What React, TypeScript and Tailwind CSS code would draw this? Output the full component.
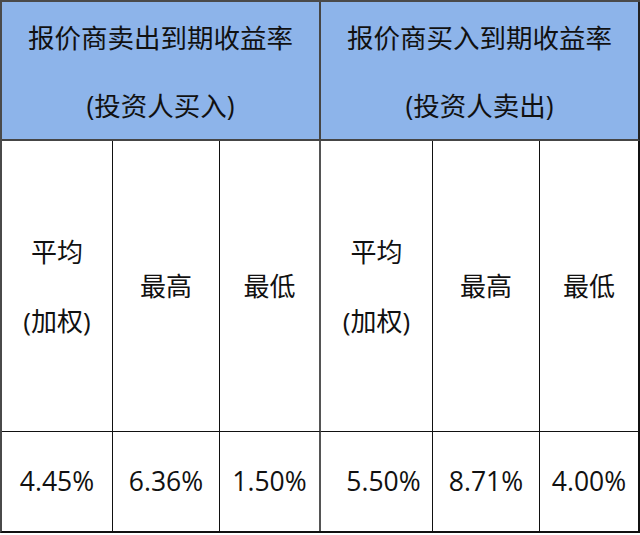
import React from 'react';

const font = { fontFamily: '"Open Sans", "Noto Sans CJK SC", sans-serif' };

const groups = [
  { title: '报价商卖出到期收益率', sub: '(投资人买入)', values: ['4.45%', '6.36%', '1.50%'] },
  { title: '报价商买入到期收益率', sub: '(投资人卖出)', values: ['5.50%', '8.71%', '4.00%'] },
];

export default function App() {
  return (
    <div className="w-[640px] h-[535px] bg-white text-[#111]" style={font}>
      <div className="grid grid-cols-[111px_107px_101px_112px_107px_100px] grid-rows-[139px_290px_100px] w-[640px] border-l-2 border-t-2 border-l-[#4a4a4a] border-t-[#4a4a4a] border-b-2 border-b-[#111]">
        {/* 表头 */}
        {groups.map((g, i) => (
          <div
            key={g.title}
            className={
              'col-span-3 bg-[#8db4ea] border-b-2 border-b-[#454545] flex flex-col items-center pt-[17px] text-[26.5px] ' +
              (i === 0 ? 'border-r-2 border-r-[#454545]' : 'border-r-2 border-r-[#222]')
            }
          >
            <div className="leading-[38px]">{g.title}</div>
            <div className="leading-[38px] mt-[30px]">{g.sub}</div>
          </div>
        ))}

        {/* 平均 / 最高 / 最低 */}
        {groups.map((g, i) => (
          <React.Fragment key={g.sub}>
            <div className="flex flex-col items-center justify-center text-[26px] border-r border-r-[#111]">
              <div className="leading-[38px]">平均</div>
              <div className="leading-[38px] mt-[31px]">(加权)</div>
            </div>
            <div className="flex items-center justify-center text-[26px] border-r border-r-[#111]">最高</div>
            <div
              className={
                'flex items-center justify-center text-[26px] ' +
                (i === 0 ? 'border-r-2 border-r-[#555]' : 'border-r-2 border-r-[#111]')
              }
            >
              最低
            </div>
          </React.Fragment>
        ))}

        {/* 数值 */}
        {groups.map((g, i) =>
          g.values.map((v, j) => (
            <div
              key={g.sub + v}
              className={
                'flex items-center justify-center text-[26.5px] border-t border-t-[#111] ' +
                (j === 2 ? 'border-r-2 ' + (i === 0 ? 'border-r-[#555]' : 'border-r-[#111]') : 'border-r border-r-[#111]') +
                (i === 1 && j === 0 ? ' pl-[14px]' : '')
              }
            >
              {v}
            </div>
          ))
        )}
      </div>
    </div>
  );
}
